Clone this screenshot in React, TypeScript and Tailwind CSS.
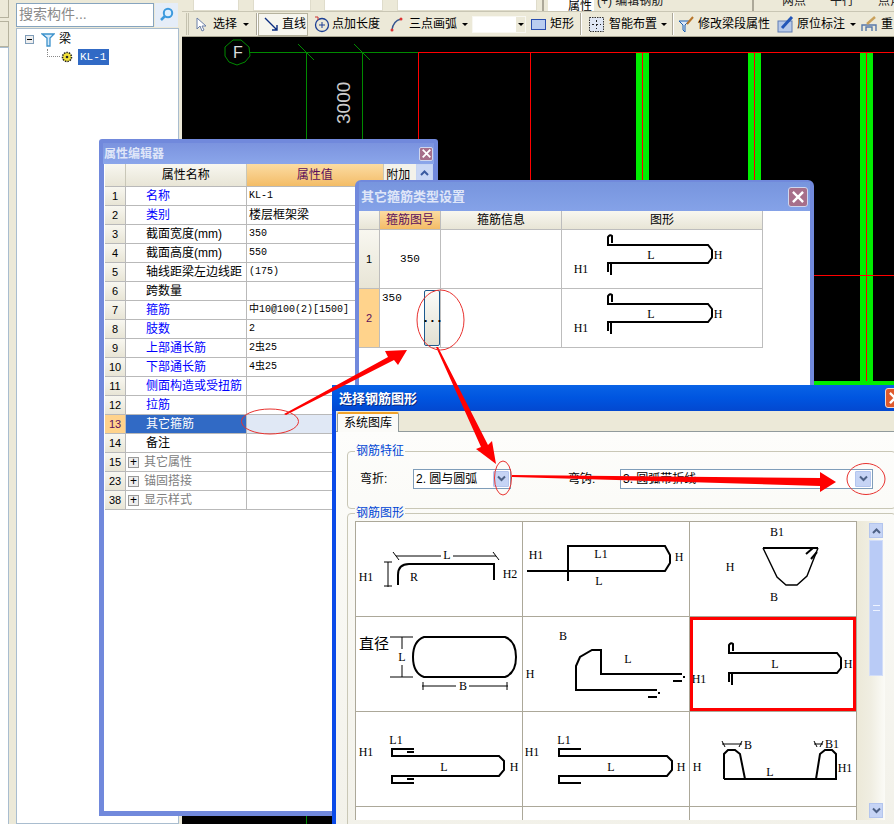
import React from "react";

const sans = "font-['Liberation_Sans','Noto_Sans_CJK_SC',sans-serif]";
const mono = "font-['Liberation_Mono','Noto_Sans_CJK_SC',monospace]";

function Lbl({ x, y, t, size = 12 }: { x: number; y: number; t: string; size?: number }) {
  return (
    <text x={x} y={y + 4} textAnchor="middle" fontSize={size} fontFamily="'Liberation Serif','Noto Sans CJK SC',serif" fill="#000">
      {t}
    </text>
  );
}

function Cell({ box, children, className = "" }: { box: string; children?: React.ReactNode; className?: string }) {
  return (
    <div className={`border-r border-b border-[#aca899] bg-white ${className}`}>
      <svg viewBox={box} width="166" height="94" className="block">
        <g fill="none" stroke="#000" strokeWidth="2">{children}</g>
      </svg>
    </div>
  );
}

function Hook({ l, r, t, b }: { l: number; r: number; t: number; b: number }) {
  return (
    <path d={`M${l + 4} ${t - 2} V${t - 9} Q${l + 2} ${t - 11} ${l} ${t - 8} V${t} H${r} L${r + 4} ${t + 5} V${b - 5} L${r} ${b} H${l} V${b + 9} M${l + 3} ${b + 1} V${b + 12}`} />
  );
}

function X({ className = "" }: { className?: string }) {
  return (
    <svg viewBox="0 0 10 10" className={className}>
      <path d="M1.5 1.5 8.5 8.5M8.5 1.5 1.5 8.5" stroke="#fff" strokeWidth="2" strokeLinecap="square" />
    </svg>
  );
}

function Caret({ className = "" }: { className?: string }) {
  return <span className={`inline-block border-x-[3px] border-t-[3px] border-x-transparent border-t-black ${className}`} />;
}

function ToolTxt({ t, className = "" }: { t: string; className?: string }) {
  return <span className={`text-[12px] leading-none whitespace-nowrap text-black ${className}`}>{t}</span>;
}

function Sep({ className = "" }: { className?: string }) {
  return <span className={`h-[22px] w-[2px] shrink-0 border-l border-[#aca899] bg-white ${className}`} />;
}

function TopBars() {
  return (
    <div className="bg-[#ece9d8] shrink-0">
      <div className="h-[12px] overflow-hidden flex items-end border-b border-[#c9c6b4] pl-[11px]">
        <span className="h-[20px] w-[46px] bg-white border border-[#dfdccb] shrink-0" />
        <span className="h-[20px] w-[9px] mr-[5px] shrink-0" />
        <span className="h-[20px] w-[58px] bg-white border border-[#dfdccb] shrink-0" />
        <span className="h-[20px] w-[13px] shrink-0" />
        <span className="h-[20px] w-[59px] bg-white border border-[#dfdccb] shrink-0" />
        <span className="h-[20px] w-[14px] shrink-0" />
        <span className="h-[20px] w-[140px] bg-white border border-[#dfdccb] shrink-0" />
        <span className="h-[20px] w-[2px] bg-[#aca899] ml-[5px] mr-[4px] shrink-0" />
        <span className="h-[20px] w-[46px] bg-white text-[12px] text-right pr-[2px] leading-[30px] shrink-0">属性</span>
        <span className="text-[12px] leading-[20px] ml-[3px] w-[155px] shrink-0 text-[#222]">(+) 编辑钢筋</span>
        <span className="h-[20px] w-[2px] bg-[#aca899] mr-[28px] shrink-0" />
        <span className="text-[12px] leading-[20px] mr-[24px] shrink-0 text-[#222]">两点</span>
        <span className="text-[12px] leading-[20px] mr-[24px] shrink-0 text-[#222]">平行</span>
        <span className="text-[12px] leading-[20px] shrink-0 text-[#222]">点角</span>
      </div>
      <div className="h-[25px] flex items-center border-b border-[#a9a692] pl-[4px] relative">
        <span className="h-[22px] w-[3px] border-x border-[#c5c2af] mr-[6px] shrink-0" />
        <svg width="12" height="15" viewBox="0 0 12 15" className="shrink-0 mr-[6px]">
          <path d="M2 1v11l3-3 2 5 2-1-2-4h4z" fill="#fff" stroke="#6a7fa8" />
        </svg>
        <ToolTxt t="选择" />
        <Caret className="ml-[6px] mr-[7px]" />
        <Sep />
        <span className="flex h-[23px] w-[50px] items-center gap-[3px] border border-[#b5b29e] bg-[#f6f5ee] pl-[5px] shrink-0">
          <svg width="15" height="15" viewBox="0 0 15 15" className="shrink-0">
            <path d="M1 1 13 13M13 8V13H8" fill="none" stroke="#0a2c80" strokeWidth="1.4" />
          </svg>
          <ToolTxt t="直线" />
        </span>
        <svg width="16" height="17" viewBox="0 0 16 17" className="shrink-0 ml-[6px] mr-[2px]">
          <circle cx="8" cy="9" r="6.5" fill="none" stroke="#1c3f94" strokeWidth="1.3" />
          <path d="M8 6v6M5 9h6" stroke="#1c3f94" />
          <path d="M1 1h3v3" fill="none" stroke="#c33" />
        </svg>
        <ToolTxt t="点加长度" />
        <svg width="14" height="15" viewBox="0 0 14 15" className="shrink-0 ml-[10px] mr-[5px]">
          <path d="M2 13Q3 4 11 2" fill="none" stroke="#35568f" strokeWidth="1.3" />
          <circle cx="2" cy="13" r="1.5" fill="#d33" />
          <circle cx="11" cy="2" r="1.5" fill="#d33" />
        </svg>
        <ToolTxt t="三点画弧" />
        <Caret className="ml-[5px] mr-[4px]" />
        <span className="flex h-[17px] w-[54px] items-center justify-end border border-[#f8f7f1] bg-white shrink-0">
          <span className="flex h-full w-[9px] items-center justify-center bg-[#ece9d8]"><Caret /></span>
        </span>
        <svg width="15" height="11" viewBox="0 0 15 11" className="shrink-0 ml-[5px] mr-[4px]">
          <rect x="0.5" y="0.5" width="14" height="10" fill="#b9cdf0" stroke="#2a4fb0" />
        </svg>
        <ToolTxt t="矩形" />
        <Sep className="ml-[6px] mr-[7px]" />
        <svg width="15" height="15" viewBox="0 0 15 15" className="shrink-0 mr-[5px]">
          <rect x="0.5" y="0.5" width="14" height="14" fill="#dfe7f5" stroke="#333" strokeDasharray="1.5 1" />
          <path d="M7.5 3v9M3 7.5h9" stroke="#222" strokeDasharray="2 2" />
        </svg>
        <ToolTxt t="智能布置" />
        <Caret className="ml-[4px] mr-[5px]" />
        <Sep className="mr-[4px]" />
        <svg width="16" height="17" viewBox="0 0 16 17" className="shrink-0 mr-[4px]">
          <path d="M1 5h10L7 9v7L5 14V9z" fill="#dce8f8" stroke="#1a5fb0" />
          <path d="M9 8 15 1" stroke="#b8752a" strokeWidth="2" />
        </svg>
        <ToolTxt t="修改梁段属性" />
        <svg width="17" height="17" viewBox="0 0 17 17" className="shrink-0 ml-[7px] mr-[3px]">
          <rect x="1" y="5" width="14" height="11" fill="#b7c9e8" stroke="#5f7db3" />
          <path d="M5 12 15 1" stroke="#2256b8" strokeWidth="3" />
        </svg>
        <ToolTxt t="原位标注" />
        <Caret className="ml-[5px] mr-[5px]" />
        <svg width="16" height="16" viewBox="0 0 16 16" className="shrink-0 mr-[4px]">
          <path d="M1 15V9h14v6M5 15v-4h6v4" fill="none" stroke="#5577aa" strokeWidth="1.4" />
          <path d="M6 8 14 1" stroke="#c9a05a" strokeWidth="2.4" />
        </svg>
        <ToolTxt t="重" />
      </div>
    </div>
  );
}

function Canvas() {
  const bars = [636, 748, 860];
  return (
    <div className="flex-1 bg-black overflow-hidden">
      <svg viewBox="182 37 712 787" width="712" height="787" className="block">
        <path d="M250 52.5H418M306.5 52.5V824M362.5 52.5V824M298 44 314 60M354 44 370 60" stroke="#008a00" fill="none" />
        <polygon points="233,40 241,40 249,47 250,56 245,62 237,65 229,62 225,56 225,47" fill="none" stroke="#008a00" />
        <text x="238" y="58" textAnchor="middle" fill="#ddd" fontSize="16" fontFamily="'Liberation Sans',sans-serif">F</text>
        <text transform="translate(350 124) rotate(-90)" fill="#ccc" fontSize="19" fontFamily="'Liberation Sans',sans-serif">3000</text>
        {bars.map((x) => (
          <g key={x}>
            <rect x={x} y="52" width="13" height="772" fill="#00ee00" />
            <rect x={x + 6} y="52" width="1" height="772" fill="#ff0000" />
          </g>
        ))}
        <path d="M418 52.5H894M418.5 52V824M530.5 52V824M182 275.5H894" stroke="#f00" fill="none" />
        <rect x="182" y="381" width="712" height="4" fill="#00ee00" />
      </svg>
    </div>
  );
}

function Sidebar() {
  return (
    <div className="w-[182px] h-full shrink-0 flex bg-[#ece9d8]">
      <div className="w-[16px] shrink-0 flex flex-col">
        <div className="h-[18px] w-[9px] border-r border-b border-[#b5b29e] bg-[#ece9d8] shrink-0" />
        <div className="h-[26px] mt-[3px] w-[9px] border-r border-b border-t border-[#b5b29e] bg-[#ece9d8] shrink-0" />
        <div className="flex-1 w-[9px] border-r border-t border-[#a9bdcf] bg-white" />
      </div>
      <div className="w-[163px] shrink-0 flex flex-col">
        <div className="h-[28px] flex items-center pt-[1px] shrink-0">
          <div className="w-[138px] h-[24px] border border-[#86a4bf] bg-white text-[14px] leading-[20px] pl-[2px] text-[#8a8a8a] whitespace-nowrap">搜索构件...</div>
          <div className="ml-[1px] w-[23px] h-[24px] flex items-center justify-center bg-[#e5edf8]">
            <svg width="15" height="15" viewBox="0 0 15 15">
              <circle cx="9" cy="6" r="4.2" fill="#dff0ff" stroke="#3c9ade" strokeWidth="2" />
              <path d="M6 9 2 13" stroke="#3c9ade" strokeWidth="2.5" />
            </svg>
          </div>
        </div>
        <div className="flex-1 border border-[#a9bdcf] bg-white pl-[8px] pt-[1px]">
          <div className="flex items-center h-[18px]">
            <span className="w-[9px] h-[9px] border border-[#7f9db9] flex items-center justify-center mr-[7px] bg-[#eee]">
              <span className="w-[5px] h-px bg-black" />
            </span>
            <svg width="14" height="15" viewBox="0 0 14 15" className="mr-[4px]">
              <path d="M1 2h12L9 6v8H6V6z" fill="#d6eafa" stroke="#3d92cc" strokeWidth="1.3" />
              <path d="M6 6 2 3M9 6l3-3" stroke="#3d92cc" />
            </svg>
            <span className="text-[12px] leading-none text-black">梁</span>
          </div>
          <div className="flex items-center h-[17px] pl-[22px]">
            <span className="w-[13px] h-[8px] border-l border-b border-dotted border-[#888] -mt-[8px] mr-[1px]" />
            <svg width="12" height="12" viewBox="0 0 12 12" className="mr-[5px]">
              <circle cx="6" cy="6" r="4.5" fill="#f4e33a" stroke="#222" strokeDasharray="1.5 1" strokeWidth="1.6" />
              <circle cx="6" cy="6" r="1.3" fill="#222" />
            </svg>
            <span className={`${mono} h-[16px] w-[31px] bg-[#316ac5] text-white text-[11px] leading-[16px] pl-[2px]`}>KL-1</span>
          </div>
        </div>
      </div>
    </div>
  );
}

const rows: { n: string; name: string; val?: string; tone?: "blue" | "gray"; group?: boolean; sel?: boolean; zh?: boolean }[] = [
  { n: "1", name: "名称", val: "KL-1", tone: "blue" },
  { n: "2", name: "类别", val: "楼层框架梁", tone: "blue", zh: true },
  { n: "3", name: "截面宽度(mm)", val: "350" },
  { n: "4", name: "截面高度(mm)", val: "550" },
  { n: "5", name: "轴线距梁左边线距", val: "(175)" },
  { n: "6", name: "跨数量" },
  { n: "7", name: "箍筋", val: "中10@100(2)[1500]", tone: "blue" },
  { n: "8", name: "肢数", val: "2", tone: "blue" },
  { n: "9", name: "上部通长筋", val: "2虫25", tone: "blue" },
  { n: "10", name: "下部通长筋", val: "4虫25", tone: "blue" },
  { n: "11", name: "侧面构造或受扭筋", tone: "blue" },
  { n: "12", name: "拉筋", tone: "blue" },
  { n: "13", name: "其它箍筋", sel: true },
  { n: "14", name: "备注" },
  { n: "15", name: "其它属性", tone: "gray", group: true },
  { n: "23", name: "锚固搭接", tone: "gray", group: true },
  { n: "38", name: "显示样式", tone: "gray", group: true },
];

const numCell = "bg-gradient-to-b from-[#f8f7f0] to-[#e8e5d6]";

function PropWindow() {
  return (
    <div className={`absolute left-[99px] top-[139px] w-[339px] h-[677px] border-[5px] border-t-[4px] border-[#7189dc] rounded-t-[3px] flex flex-col bg-white ${sans}`}>
      <div className="h-[21px] shrink-0 -mx-[1px] bg-gradient-to-b from-[#7b93df] to-[#8ba6ea] flex items-center justify-between pl-[1px] pr-[1px]">
        <span className="text-[12px] font-bold text-[#dfe6f8] leading-none">属性编辑器</span>
        <span className="w-[14px] h-[14px] rounded-[2px] border border-[#cfd6ee] bg-[#a76f8a] flex items-center justify-center">
          <X className="w-[9px] h-[9px]" />
        </span>
      </div>
      <div className="flex flex-col ml-[1px]">
        <div className="flex h-[22px] text-[12px] leading-[22px] text-center">
          <div className={`w-[21px] border-r border-[#c9c7b8] ${numCell}`} />
          <div className={`w-[121px] border-r border-[#c9c7b8] text-black ${numCell}`}>属性名称</div>
          <div className="w-[138px] bg-gradient-to-b from-[#fbdca2] to-[#f3bc66] text-[#5b0f5b] border-r border-[#c9c7b8]">属性值</div>
          <div className="w-[32px] text-left pl-[2px] text-black bg-[#f3f2ea]">附加</div>
          <div className="w-[17px] h-[17px] border border-[#c5d4f2] bg-[#c9d7f5] flex items-center justify-center">
            <svg width="9" height="6" viewBox="0 0 9 6"><path d="M1 5 4.5 1.5 8 5" stroke="#3a5aa0" strokeWidth="2" fill="none" /></svg>
          </div>
        </div>
        {rows.map((r) => (
          <div key={r.n} className="flex h-[19px] w-[312px] border-t border-[#b9b9b9] text-[12px] leading-[18px]">
            <div className={`w-[21px] border-r border-[#b9b9b9] text-center text-[11px] ${r.sel ? "bg-[#ffd38c] text-[#5b0f5b]" : `text-black ${numCell}`}`}>{r.n}</div>
            <div className={`w-[121px] border-r border-[#b9b9b9] flex items-center whitespace-nowrap overflow-hidden ${r.sel ? "bg-[#316ac5] text-white" : r.tone === "blue" ? "text-[#0000ff]" : r.tone === "gray" ? "text-[#808080]" : "text-black"} ${r.group ? "pl-[2px]" : "pl-[20px]"}`}>
              {r.group && (
                <span className="w-[11px] h-[11px] border border-[#999] bg-[#eee] text-black text-[12px] leading-[9px] text-center mr-[5px] shrink-0">+</span>
              )}
              {r.name}
            </div>
            <div className={`w-[138px] pl-[2px] whitespace-nowrap ${r.zh ? "" : `${mono} text-[10px]`} text-black ${r.sel ? "bg-[#e0e8f5]" : ""}`}>{r.val ?? ""}</div>
          </div>
        ))}
        <div className="w-[280px] ml-0 border-t border-[#b9b9b9]" />
      </div>
    </div>
  );
}

function StirrupRow({ n, active, top }: { n: string; active?: boolean; top: number }) {
  return (
    <div className="flex h-[59px] border-b border-[#bdbdbd]">
      <div className={`w-[21px] border-r border-[#bdbdbd] flex items-center justify-center text-[11px] ${active ? "bg-[#ffd38c] text-[#5b0f5b]" : `text-black ${numCell}`}`}>{n}</div>
      <div className={`w-[61px] border-r border-[#bdbdbd] relative ${mono} text-[11px] text-black ${active ? "pl-[2px] pt-[1px]" : "flex items-center justify-center"}`}>
        350
        {active && (
          <span className="absolute left-[44px] top-[1px] w-[16px] h-[56px] rounded-[2px] border border-[#1d5a8e] bg-gradient-to-b from-[#fbfbf8] to-[#e2e0d2] flex items-center justify-center text-[13px] font-bold leading-none tracking-[-1px]">...</span>
        )}
      </div>
      <div className="w-[121px] border-r border-[#bdbdbd]" />
      <div className="w-[201px] border-r border-[#bdbdbd]">
        <svg viewBox={`561 ${top} 201 58`} width="201" height="58" className="block">
          <g fill="none" stroke="#000" strokeWidth="2"><Hook l={607} r={707} t={top + 15} b={top + 33} /></g>
          <Lbl x={650} y={top + 25} t="L" />
          <Lbl x={717} y={top + 25} t="H" />
          <Lbl x={580} y={top + 39} t="H1" />
        </svg>
      </div>
    </div>
  );
}

function StirrupWindow() {
  return (
    <div className={`absolute left-[355px] top-[180px] w-[459px] h-[215px] border-[4px] border-t-[2px] border-[#7189dc] rounded-t-[6px] flex flex-col bg-white ${sans}`}>
      <div className="h-[29px] shrink-0 bg-gradient-to-b from-[#7795de] to-[#85a2e8] flex items-center justify-between pl-[2px] pr-[2px]">
        <span className="text-[13px] font-bold text-[#dfe6f8] leading-none">其它箍筋类型设置</span>
        <span className="w-[20px] h-[20px] rounded-[3px] border border-[#cfd6ee] bg-[#a76f8a] flex items-center justify-center">
          <X className="w-[12px] h-[12px]" />
        </span>
      </div>
      <div className="flex flex-col w-[404px]">
        <div className="flex h-[19px] text-[12px] leading-[19px] text-center border-b border-[#bdbdbd]">
          <div className={`w-[21px] border-r border-[#bdbdbd] ${numCell}`} />
          <div className="w-[61px] border-r border-[#bdbdbd] bg-gradient-to-b from-[#fbdca2] to-[#f3bc66] text-[#5b0f5b]">箍筋图号</div>
          <div className={`w-[121px] border-r border-[#bdbdbd] text-black ${numCell}`}>箍筋信息</div>
          <div className={`w-[201px] border-r border-[#bdbdbd] text-black ${numCell}`}>图形</div>
        </div>
        <StirrupRow n="1" top={230} />
        <StirrupRow n="2" active top={289} />
      </div>
    </div>
  );
}

function Combo({ value, w }: { value: string; w: string }) {
  return (
    <div className={`${w} h-[20px] border border-[#7f9db9] bg-white flex items-center justify-between pl-[2px] pr-[1px] text-[12px] text-black shrink-0`}>
      <span className="whitespace-nowrap">{value}</span>
      <span className="w-[16px] h-[16px] rounded-[1px] bg-[#c6d4f5] border border-[#b3c5ee] flex items-center justify-center">
        <svg width="9" height="7" viewBox="0 0 9 7"><path d="M1 1.5 4.5 5 8 1.5" stroke="#4d6185" strokeWidth="2" fill="none" /></svg>
      </span>
    </div>
  );
}

function Gallery() {
  return (
    <div className="grid grid-cols-[167px_167px_167px] grid-rows-[95px_95px_95px_95px] border-t border-l border-[#aca899] h-[299px] w-[502px] overflow-hidden shrink-0">
      <Cell box="356 523 166 94">
        <path d="M398 586V576Q398 565 409 565H494V581" />
        <g strokeWidth="1"><path d="M396 557H441M453 557H496M388 563V588M384 563h8M384 587h8M393 553l6 8M493 553l6 8" /></g>
        <g stroke="none"><Lbl x={366} y={578} t="H1" /><Lbl x={414} y={578} t="R" /><Lbl x={447} y={556} t="L" /><Lbl x={510} y={575} t="H2" /></g>
      </Cell>
      <Cell box="523 523 166 94">
        <path d="M527 572H665L670 564V556L665 547H568V582" />
        <g stroke="none"><Lbl x={536} y={556} t="H1" /><Lbl x={601} y={555} t="L1" /><Lbl x={599} y={582} t="L" /><Lbl x={679} y={558} t="H" /></g>
      </Cell>
      <Cell box="690 523 166 94">
        <path d="M763 549H818M806 555 813 549M811 560 817 553" />
        <path d="M763 549 777 578 786 586H797L807 577 818 549" strokeWidth="1.4" />
        <g stroke="none"><Lbl x={777} y={533} t="B1" /><Lbl x={730} y={568} t="H" /><Lbl x={774} y={598} t="B" /></g>
      </Cell>
      <Cell box="356 618 166 94">
        <path d="M424 638H505Q516 642 516 658Q516 674 505 678H424Q413 674 413 658Q413 642 424 638Z" />
        <g strokeWidth="1"><path d="M390 638H413M390 678H413M402 638V650M402 666V678M422 687H456M469 687H508M423 683v8M507 683v8" /></g>
        <g stroke="none"><Lbl x={374} y={646} t="直径" size={15} /><Lbl x={402} y={658} t="L" /><Lbl x={463} y={687} t="B" /></g>
      </Cell>
      <Cell box="523 618 166 94">
        <path d="M682 675H601V651H592L580 658 576 667V691H657M673 682H682M648 698H657" />
        <path d="M684 677v2M659 693v2" />
        <g stroke="none"><Lbl x={563} y={637} t="B" /><Lbl x={530} y={675} t="H" /><Lbl x={628} y={660} t="L" /></g>
      </Cell>
      <Cell box="690 618 166 94">
        <Hook l={729} r={837} t={654} b={674} />
        <g stroke="none"><Lbl x={699} y={680} t="H1" /><Lbl x={775} y={665} t="L" /><Lbl x={848} y={665} t="H" /></g>
        <rect x="691.5" y="619.5" width="163" height="91" stroke="#f00" strokeWidth="3" />
      </Cell>
      <Cell box="356 713 166 94">
        <path d="M414 750H392V757H499L504 762V771L499 777H392V784H414M407 753H414M407 780H414" />
        <g stroke="none"><Lbl x={366} y={753} t="H1" /><Lbl x={396} y={741} t="L1" /><Lbl x={444} y={768} t="L" /><Lbl x={514} y={768} t="H" /></g>
      </Cell>
      <Cell box="523 713 166 94">
        <path d="M581 750H559V757H667L672 762V771L667 777H559V784H581" />
        <g stroke="none"><Lbl x={532} y={753} t="H1" /><Lbl x={564} y={741} t="L1" /><Lbl x={611} y={768} t="L" /><Lbl x={681} y={768} t="H" /></g>
      </Cell>
      <Cell box="690 713 166 94">
        <path d="M724 780H836V755L832 751H825L820 755 816 780M724 780V755L728 751H735L740 755 745 780" />
        <g strokeWidth="1"><path d="M722 745H742M722 742l3 6M742 742l-3 6M814 745h9M814 742l3 6M823 742l-3 6" /></g>
        <g stroke="none"><Lbl x={697} y={768} t="H" /><Lbl x={748} y={746} t="B" /><Lbl x={832} y={745} t="B1" /><Lbl x={770} y={773} t="L" /><Lbl x={845} y={769} t="H1" /></g>
      </Cell>
      <div className="border-r border-[#aca899] bg-white" />
      <div className="border-r border-[#aca899] bg-white" />
      <div className="border-r border-[#aca899] bg-white" />
    </div>
  );
}

function Scrollbar() {
  return (
    <div className="w-[28px] h-[299px] pl-[12px] pr-[2px] py-[2px] flex flex-col gap-[2px] bg-gradient-to-r from-[#ece9d8] via-[#f0eee2] to-[#fbfbf7] shrink-0">
      <span className="h-[15px] bg-[#c6d4f5] border border-[#b3c5ee] flex items-center justify-center shrink-0">
        <svg width="9" height="6" viewBox="0 0 9 6"><path d="M1 5 4.5 1.5 8 5" stroke="#4d6185" strokeWidth="2" fill="none" /></svg>
      </span>
      <span className="h-[136px] bg-[#b9cbf6] border border-[#d2ddf8] flex items-center justify-center shrink-0">
        <span className="w-[7px] h-[6px] border-y border-[#eef3ff]" />
      </span>
      <span className="flex-1" />
      <span className="h-[15px] bg-[#c6d4f5] border border-[#b3c5ee] flex items-center justify-center shrink-0">
        <svg width="9" height="7" viewBox="0 0 9 7"><path d="M1 1.5 4.5 5 8 1.5" stroke="#4d6185" strokeWidth="2" fill="none" /></svg>
      </span>
    </div>
  );
}

function ShapeWindow() {
  return (
    <div className={`absolute left-[332px] top-[385px] w-[570px] h-[445px] border-l-[4px] border-[#0a4ae8] flex flex-col ${sans}`}>
      <div className="h-[26px] shrink-0 -ml-[4px] bg-gradient-to-b from-[#0a63e6] via-[#0055e0] to-[#0348d0] flex items-center justify-between pl-[7px]">
        <span className="text-[13px] font-bold text-white leading-none [text-shadow:1px_1px_0_#0a2a80]">选择钢筋图形</span>
        <span className="w-[20px] h-[20px] -mr-[3px] rounded-[3px] border border-[#f3d9cf] bg-[#df5a2c] flex items-center justify-center">
          <X className="w-[12px] h-[12px]" />
        </span>
      </div>
      <div className="flex-1 flex flex-col bg-[#ece9d8]">
        <div className="h-[21px] shrink-0 flex items-end border-b border-[#919b9c] pl-[1px] pt-[2px]">
          <div className="w-[62px] h-[20px] -mb-px bg-[#fbfbf8] border-x border-[#919b9c] border-t-[2px] border-t-[#f0a22a] rounded-t-[2px] text-[12px] text-center leading-[18px] text-black">系统图库</div>
        </div>
        <div className="flex-1 pl-[11px] pr-[6px] bg-gradient-to-b from-[#fdfdfb] to-[#f2f1e9]">
          <div className="relative mt-[19px] h-[58px] border border-[#c9c7b6] rounded-[4px] flex items-center pl-[12px] pb-[3px]">
            <span className="absolute -top-[8px] left-[7px] px-[1px] bg-[#fcfcf9] text-[12px] leading-[14px] text-[#0046d5]">钢筋特征</span>
            <span className="text-[12px] text-black w-[53px] shrink-0">弯折:</span>
            <Combo value="2. 圆与圆弧" w="w-[98px]" />
            <span className="text-[12px] text-black ml-[57px] w-[52px] shrink-0">弯钩:</span>
            <Combo value="3. 圆弧带折线" w="w-[253px]" />
          </div>
          <div className="relative mt-[4px] h-[320px] border border-[#c9c7b6] rounded-[4px] pl-[7px] pt-[7px] flex items-start">
            <span className="absolute -top-[8px] left-[7px] px-[1px] bg-[#f9f9f5] text-[12px] leading-[14px] text-[#0046d5]">钢筋图形</span>
            <Gallery />
            <Scrollbar />
          </div>
        </div>
      </div>
    </div>
  );
}

function Annotations() {
  return (
    <svg viewBox="0 0 894 824" width="894" height="824" className="absolute left-0 top-0 pointer-events-none">
      <g fill="#ff0000">
        <polygon points="284,414 388,357 385,351 407,350 398,365 394,360 286,415" />
        <polygon points="436,347 438,347 488,445 492,441 496,464 476,449 481,447" />
        <polygon points="512,475 820,478 820,472 836,482 820,492 820,486 512,477" />
      </g>
      <g fill="none" stroke="#e8322f" strokeWidth="1">
        <ellipse cx="270" cy="421.5" rx="28.5" ry="12.5" />
        <ellipse cx="440.5" cy="320" rx="23.5" ry="30" />
        <ellipse cx="503" cy="478" rx="8.5" ry="17" />
        <ellipse cx="866" cy="479" rx="19" ry="15.5" />
      </g>
    </svg>
  );
}

export default function App() {
  return (
    <div className={`relative w-[894px] h-[824px] overflow-hidden bg-[#ece9d8] flex ${sans}`}>
      <Sidebar />
      <div className="flex-1 flex flex-col min-w-0">
        <TopBars />
        <Canvas />
      </div>
      <PropWindow />
      <StirrupWindow />
      <ShapeWindow />
      <Annotations />
    </div>
  );
}
